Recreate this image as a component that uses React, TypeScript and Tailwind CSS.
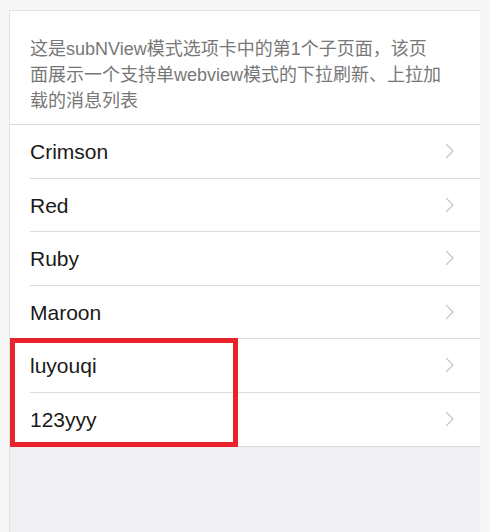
import React from "react";

const items = ["Crimson", "Red", "Ruby", "Maroon", "luyouqi", "123yyy"];

function Chevron() {
  return (
    <svg width="10" height="16" viewBox="0 0 10 16" fill="none" className="shrink-0">
      <path d="M1.5 1.5 L8 8 L1.5 14.5" stroke="#c7c7cc" strokeWidth="1.3" strokeLinecap="round" strokeLinejoin="round" />
    </svg>
  );
}

export default function App() {
  return (
    <div
      className="h-[532px] w-[490px] overflow-hidden bg-[#f7f7f7] pt-[10px] pl-[9px] pr-[10px]"
      style={{ fontFamily: '"Liberation Sans", Arial, "Noto Sans CJK SC", sans-serif' }}
    >
      <div className="relative flex h-full flex-col border-l border-t border-[#e2e2e2] bg-[#efeff4]">
        <div className="bg-white">
          <div className="border-b border-[#dcdcdc] pl-[20px] pt-[25px] pb-[10px] text-[18px] leading-[26px] text-[#777]">
            <div className="whitespace-nowrap">这是subNView模式选项卡中的第1个子页面，该页</div>
            <div className="whitespace-nowrap">面展示一个支持单webview模式的下拉刷新、上拉加</div>
            <div className="whitespace-nowrap">载的消息列表</div>
          </div>
          <ul className="border-b border-[#dcdcdc]">
            {items.map((name, i) => (
              <li key={name} className="pl-[20px]">
                <div
                  className={
                    "flex h-[53.5px] items-center justify-between pr-[25px] text-[21px] text-[#1a1a1a] " +
                    (i < items.length - 1 ? "border-b border-[#dcdcdc]" : "")
                  }
                >
                  <span className="pt-[1px]">{name}</span>
                  <Chevron />
                </div>
              </li>
            ))}
          </ul>
        </div>
        <div className="pointer-events-none absolute left-0 top-[327px] h-[109px] w-[228px] border-[5px] border-[#e8232b]" />
      </div>
    </div>
  );
}
